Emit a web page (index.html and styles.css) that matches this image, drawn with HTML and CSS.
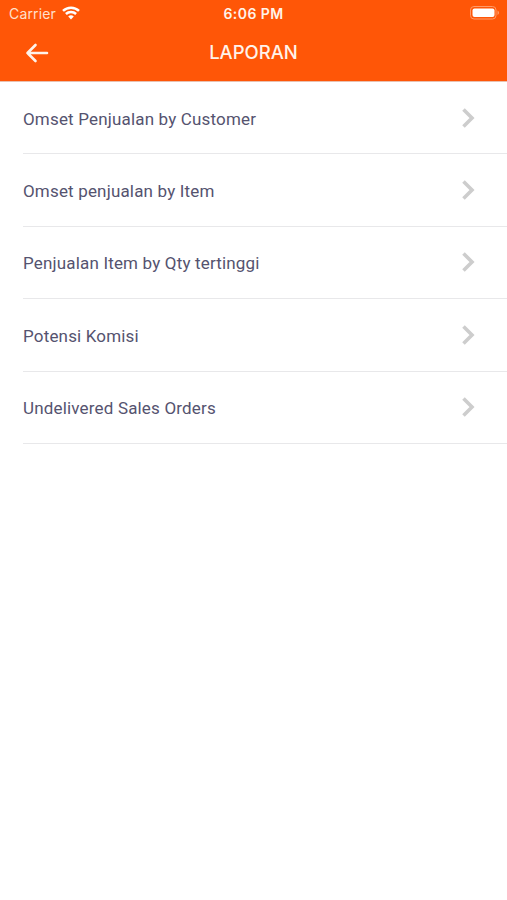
FILE: index.html
```html
<!DOCTYPE html>
<html lang="id">
<head>
    <meta charset="UTF-8">
    <meta name="viewport" content="width=device-width, initial-scale=1.0">
    <title>Laporan</title>
    <link rel="stylesheet" href="styles.css">
</head>
<body>
    <header class="header">
        <div class="status-bar">
            <div class="carrier">
                <span>Carrier</span>
                <svg class="wifi" viewBox="0 0 18 14" width="18" height="14">
                    <path d="M1 4.900a11.500 11.500 0 0 1 16 0" />
                    <path d="M3.900 8a7.400 7.400 0 0 1 10.200 0" />
                    <path class="wifi-dot" d="M6.200 10.600a4 4 0 0 1 5.600 0L9 13.600z" />
                </svg>
            </div>
            <span class="time">6:06 PM</span>
            <svg class="battery" viewBox="0 0 30 14" width="30" height="14">
                <rect class="battery-case" x="0.5" y="0.5" width="25.500" height="12.500" rx="3.500" />
                <rect x="2.500" y="2.500" width="22" height="8.500" rx="2" />
                <path class="battery-tip" d="M27.500 4.500c2 .8 2 3.700 0 4.500z" />
            </svg>
        </div>
        <nav class="nav-bar">
            <a class="back" href="#" aria-label="Kembali">
                <svg viewBox="0 0 24 20" width="24" height="20">
                    <path d="M22 10H2.500M10.500 2L2.500 10l8 8" />
                </svg>
            </a>
            <h1>LAPORAN</h1>
        </nav>
    </header>
    <ul class="menu">
        <li><span>Omset Penjualan by Customer</span><svg viewBox="0 0 14 22" width="14" height="22"><path d="M2.500 2.500L11 11l-8.500 8.500" /></svg></li>
        <li><span>Omset penjualan by Item</span><svg viewBox="0 0 14 22" width="14" height="22"><path d="M2.500 2.500L11 11l-8.500 8.500" /></svg></li>
        <li><span>Penjualan Item by Qty tertinggi</span><svg viewBox="0 0 14 22" width="14" height="22"><path d="M2.500 2.500L11 11l-8.500 8.500" /></svg></li>
        <li><span>Potensi Komisi</span><svg viewBox="0 0 14 22" width="14" height="22"><path d="M2.500 2.500L11 11l-8.500 8.500" /></svg></li>
        <li><span>Undelivered Sales Orders</span><svg viewBox="0 0 14 22" width="14" height="22"><path d="M2.500 2.500L11 11l-8.500 8.500" /></svg></li>
    </ul>
</body>
</html>
```
FILE: styles.css
```css
body {
    margin: 0;
    background-color: #fff;
    color: #55536f;
    font-family: Roboto, sans-serif;
}
.header {
    height: 81px;
    background-color: #ff5607;
    color: #fff3ea;
    border-bottom: 1px solid #e8c0b0;
}
.status-bar {
    display: grid;
    grid-template-columns: 1fr auto 1fr;
    align-items: center;
    height: 27px;
    padding: 0 7px 0 9px;
    font-family: Inter, sans-serif;
    font-size: 14px;
}
.carrier {
    display: flex;
    align-items: center;
    gap: 6px;
    letter-spacing: 0.15px;
    color: #ffe0cc;
}
.wifi {
    margin-top: -2px;
    fill: none;
    stroke: #fff;
    stroke-width: 2.5;
}
.wifi-dot {
    fill: #fff;
    stroke: none;
}
.time {
    margin-left: -2px;
    font-weight: 600;
    letter-spacing: 0.45px;
}
.battery {
    justify-self: end;
    margin-top: -1px;
    fill: #fff;
}
.battery-case {
    fill: none;
    stroke: #ff9a68;
}
.battery-tip {
    fill: #ff9a68;
}
.nav-bar {
    display: grid;
    grid-template-columns: 1fr auto 1fr;
    align-items: center;
    height: 50px;
    padding: 0 25px;
}
.nav-bar h1 {
    margin: 0;
    font-family: Inter, sans-serif;
    font-size: 18.5px;
    font-weight: 500;
}
.back {
    display: flex;
    padding-top: 2px;
}
.back svg {
    fill: none;
    stroke: #fff3ea;
    stroke-width: 2.6;
    stroke-linecap: round;
    stroke-linejoin: round;
}
.menu {
    margin: 0;
    padding: 0 0 0 23px;
    list-style: none;
}
.menu li {
    display: flex;
    justify-content: space-between;
    align-items: center;
    box-sizing: border-box;
    height: 72.4px;
    padding-right: 32px;
    border-bottom: 1px solid #e8e8ea;
    font-size: 17px;
    letter-spacing: 0.17px;
}
.menu span {
    padding-top: 2px;
}
.menu svg {
    fill: none;
    stroke: #cdcdcd;
    stroke-width: 3.6;
}
```
